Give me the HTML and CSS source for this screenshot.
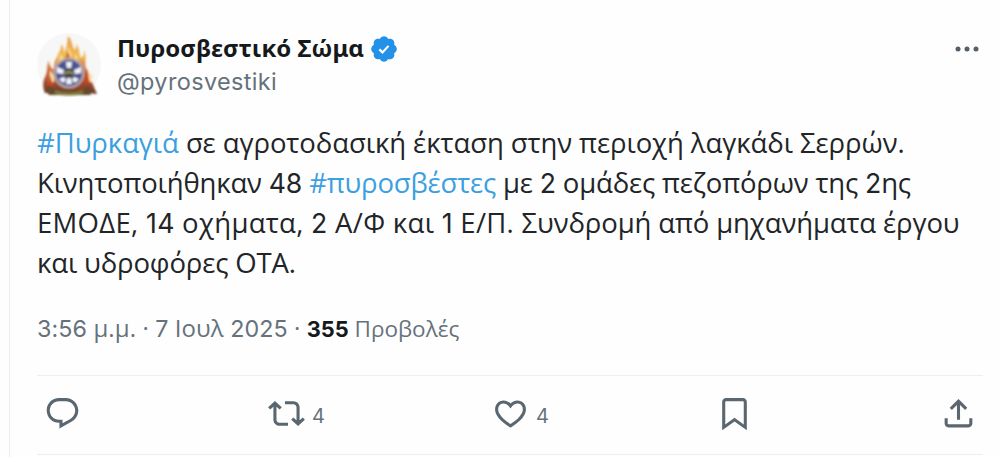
FILE: index.html
```html
<!DOCTYPE html>
<html lang="el">
<head>
<meta charset="utf-8">
<title>Πυροσβεστικό Σώμα</title>
<link rel="stylesheet" href="styles.css">
</head>
<body>
<article class="post">
  <header class="head">
    <svg class="avatar" viewBox="0 0 64 64">
      <defs>
        <linearGradient id="fire" x1="0" y1="0" x2="0" y2="1">
          <stop offset="0" stop-color="#e9a04a"/><stop offset=".35" stop-color="#f0b957"/><stop offset=".62" stop-color="#c9603a"/><stop offset="1" stop-color="#743524"/>
        </linearGradient>
        <filter id="soft"><feGaussianBlur stdDeviation=".8"/></filter>
      </defs>
      <circle cx="32" cy="32" r="32" fill="#f7f7f7"/>
      <g filter="url(#soft)">
        <path fill="url(#fire)" d="M8 60C5 53 6 48 9 42c2-5 0-9 3-15 0 5 2 7 4 10 2-4 0-8 4-13 1-5 5-7 4-13 3 3 3 6 3 9 3-5 3-9 4-17 5 5 3 9 7 14 2-3 1-4 1-6 4 5 3 10 5 14 3-2 3-5 3-8 4 8-1 14 3 20 1 4 3 5 5 6-2 5 2 10 5 18l-9-1H14z"/>
        <path fill="#fbe08a" d="M19 32c2-4 5-6 4-11 4 3 4 6 5 8 3-5 3-9 3-15 4 6 3 11 4 16 3-3 3-6 3-9 4 5 4 9 5 14l-8-2-10 2-8 7z"/>
        <path fill="#fbe3a6" d="M12 50c-2-6 2-8 1-13 3 4 5 7 4 12zM51 49c-2-6 1-7 1-12 2 6 4 7 3 12z"/>
        <path fill="#c64a25" d="M25 31c2-5 6-8 5-13 4 5 2 9 4 13zM10 51c3-2 0-5 3-9 1 5 3 7 4 12zM47 49c0-5 3-8 3-13 2 6 1 9 4 15z"/>
        <path fill="#66492b" d="M7 55q8-4 16 2h21q8-5 13 0l-4 5H12z"/>
        <circle cx="32" cy="40" r="15.5" fill="#b6a5a6"/>
        <circle cx="32" cy="40" r="13" fill="#4a5390"/>
        <path fill="#f3f4fa" d="M29 29h6l-1 7h-4zM29 51h6l-1-7h-4zM20 34l7 3-1 4-6-1zM44 34l-7 3 1 4 6-1zM22 46l5-2 2 3-3 3zM42 46l-5-2-2 3 3 3z"/>
        <circle cx="32" cy="40" r="5.3" fill="#4b453d"/>
        <path d="M27 41q5-4 10 0" stroke="#8c9878" stroke-width="2" fill="none"/>
        <path d="M18 57q14 5 28 0v4q-14 3-28 0z" fill="#81783b"/>
      </g>
    </svg>
    <div class="who">
      <div class="name"><span class="name-text">Πυροσβεστικό Σώμα</span>
        <svg class="badge" viewBox="0 0 22 22"><path d="M20.396 11c-.018-.646-.215-1.275-.57-1.816-.354-.54-.852-.972-1.438-1.246.223-.607.27-1.264.14-1.897-.131-.634-.437-1.218-.882-1.687-.47-.445-1.053-.75-1.687-.882-.633-.13-1.29-.083-1.897.14-.273-.587-.704-1.086-1.245-1.44S11.647 1.62 11 1.604c-.646.017-1.273.213-1.813.568s-.969.854-1.24 1.44c-.608-.223-1.267-.272-1.902-.14-.635.13-1.22.436-1.69.882-.445.47-.749 1.055-.878 1.688-.13.633-.08 1.29.144 1.896-.587.274-1.087.705-1.443 1.245-.356.54-.555 1.17-.574 1.817.02.647.218 1.276.574 1.817.356.54.856.972 1.443 1.245-.224.606-.274 1.263-.144 1.896.13.634.433 1.218.877 1.688.47.443 1.054.747 1.687.878.633.132 1.29.084 1.897-.136.274.586.705 1.084 1.246 1.439.54.354 1.17.551 1.816.569.647-.016 1.276-.213 1.817-.567s.972-.854 1.245-1.44c.604.239 1.266.296 1.903.164.636-.132 1.22-.447 1.68-.907.46-.46.776-1.044.908-1.681s.075-1.299-.165-1.903c.586-.274 1.084-.705 1.439-1.246.354-.54.551-1.17.569-1.816z" fill="#2491e8"/><path d="M7.6 11.3l2.3 2.2 4.4-4.8" fill="none" stroke="#fff" stroke-width="1.6"/></svg>
      </div>
      <div class="handle">@pyrosvestiki</div>
    </div>
    <svg class="more" viewBox="0 0 26 8"><circle cx="4" cy="4" r="2.5"/><circle cx="13" cy="4" r="2.5"/><circle cx="22" cy="4" r="2.5"/></svg>
  </header>

  <div class="text">
    <div class="line l1"><span class="tag">#Πυρκαγιά</span> σε αγροτοδασική έκταση στην περιοχή λαγκάδι Σερρών.</div>
    <div class="line l2">Κινητοποιήθηκαν <span class="num">48</span> <span class="tag">#πυροσβέστες</span> με <span class="num">2</span> ομάδες πεζοπόρων της <span class="num">2</span>ης</div>
    <div class="line l3"><span class="wide">ΕΜΟΔΕ, <span class="num">14</span> οχήματα, <span class="num">2</span> Α/Φ και <span class="num">1</span> Ε/Π. </span>Συνδρομή από μηχανήματα έργου</div>
    <div class="line l4">και υδροφόρες ΟΤΑ.</div>
  </div>

  <div class="meta"><span class="date"><span class="num">3:56</span> μ.μ. · <span class="num">7</span> Ιουλ <span class="num">2025</span> ·</span> <span class="views"><b class="num">355</b> <span class="views-label">Προβολές</span></span></div>

  <footer class="actions">
    <div class="action reply"><svg class="icon" viewBox="0 0 24 24"><path d="M1.751 10c0-4.42 3.584-8 8.005-8h4.366c4.49 0 8.129 3.64 8.129 8.13 0 2.96-1.607 5.68-4.196 7.11l-8.054 4.46v-3.69h-.067c-4.49.1-8.183-3.51-8.183-8.01zm8.005-6c-3.317 0-6.005 2.69-6.005 6 0 3.37 2.77 6.08 6.138 6.01l.351-.01h1.761v2.3l5.087-2.81c1.951-1.08 3.163-3.13 3.163-5.36 0-3.39-2.744-6.13-6.129-6.13H9.756z"/></svg></div>
    <div class="action repost"><svg class="icon" viewBox="0 0 24 24"><path d="M4.5 3.88l4.432 4.14-1.364 1.46L5.5 7.55V16c0 1.1.896 2 2 2H13v2H7.5c-2.209 0-4-1.79-4-4V7.55L1.432 9.48.068 8.02 4.5 3.88zM16.5 6H11V4h5.5c2.209 0 4 1.79 4 4v8.45l2.068-1.93 1.364 1.46-4.432 4.14-4.432-4.14 1.364-1.46 2.068 1.93V8c0-1.1-.896-2-2-2z"/></svg><span class="count">4</span></div>
    <div class="action like"><svg class="icon" viewBox="0 0 24 24"><path d="M16.697 5.5c-1.222-.06-2.679.51-3.89 2.16l-.805 1.09-.806-1.09C9.984 6.01 8.526 5.44 7.304 5.5c-1.243.07-2.349.78-2.91 1.91-.552 1.12-.633 2.78.479 4.82 1.074 1.97 3.257 4.27 7.129 6.61 3.87-2.34 6.052-4.64 7.126-6.61 1.111-2.04 1.03-3.7.477-4.82-.561-1.13-1.666-1.84-2.908-1.91zm4.187 7.69c-1.351 2.48-4.001 5.12-8.379 7.67l-.503.3-.504-.3c-4.379-2.55-7.029-5.19-8.382-7.67-1.36-2.5-1.41-4.86-.514-6.67.887-1.79 2.647-2.91 4.601-3.01 1.651-.09 3.368.56 4.798 2.01 1.429-1.45 3.146-2.1 4.796-2.01 1.954.1 3.714 1.22 4.601 3.01.896 1.81.846 4.17-.514 6.67z"/></svg><span class="count">4</span></div>
    <div class="action save"><svg class="icon" viewBox="0 0 24 24"><path d="M4 4.5C4 3.12 5.119 2 6.5 2h11C18.881 2 20 3.12 20 4.5v18.44l-8-5.71-8 5.71V4.5zM6.5 4c-.276 0-.5.22-.5.5v14.56l6-4.29 6 4.29V4.5c0-.28-.224-.5-.5-.5h-11z"/></svg></div>
    <div class="action share"><svg class="icon" viewBox="0 0 24 24"><path d="M12 2.59l5.7 5.7-1.41 1.42L13 6.41V16h-2V6.41l-3.3 3.3-1.41-1.42L12 2.59zM21 15l-.02 3.51c0 1.38-1.12 2.49-2.5 2.49H5.5C4.11 21 3 19.88 3 18.5V15h2v3.5c0 .28.22.5.5.5h12.98c.28 0 .5-.22.5-.5L19 15h2z"/></svg></div>
  </footer>
</article>
</body>
</html>
```
FILE: styles.css
```css
* { box-sizing: border-box; }
body { margin: 0; background: #fefefe; font-family: "Open Sans", "Noto Sans", sans-serif; color: #222528; overflow: hidden; }
.post { margin-left: 9px; height: 457px; padding: 33px 17px 0 27px; border-left: 1px solid #eceeef; }
.head { display: flex; height: 64px; }
.avatar { width: 64px; height: 64px; flex: none; }
.who { flex: 1; margin-left: 16px; }
.name { display: flex; align-items: center; height: 32px; font-family: "Noto Sans", sans-serif; font-size: 24px; font-weight: 700; line-height: 30px; white-space: nowrap; color: #16191c; }
.name-text { width: 248px; height: 32px; }
.badge { width: 30px; height: 30px; margin-left: 4px; }
.handle { height: 32px; line-height: 33px; font-family: Inter, sans-serif; font-size: 23.5px; letter-spacing: .35px; color: #66727b; }
.more { width: 26px; height: 8px; margin: 12px 3px 0 0; fill: #555f67; }
.text { margin-top: 26px; font-size: 27.5px; }
.line { height: 40px; line-height: 40px; white-space: nowrap; }
.l1 { letter-spacing: -.08px; }
.l2 { letter-spacing: -.17px; }
.l3 { letter-spacing: -.12px; }
.l4 { letter-spacing: -.15px; }
.wide { letter-spacing: .3px; }
.tag { color: #3c9fe0; }
.num { font-family: Inter, sans-serif; font-size: .97em; }
.meta { margin-top: 29px; height: 32px; line-height: 31px; font-size: 24px; color: #66727b; white-space: nowrap; }
.meta b { color: #16191c; }
.date { letter-spacing: .1px; }
.views { font-size: 22.5px; }
.actions { display: flex; margin-top: 31px; height: 80px; border-top: 1px solid #eceeef; border-bottom: 1px solid #eceeef; padding: 19px 6px 0 7px; }
.action { display: flex; height: 37px; width: 224.1px; }
.share { width: 37px; }
.icon { width: 37px; height: 37px; flex: none; fill: #5a6770; }
.count { margin-left: 7px; line-height: 42px; font-family: Inter, sans-serif; font-size: 20px; color: #66727b; }
```
